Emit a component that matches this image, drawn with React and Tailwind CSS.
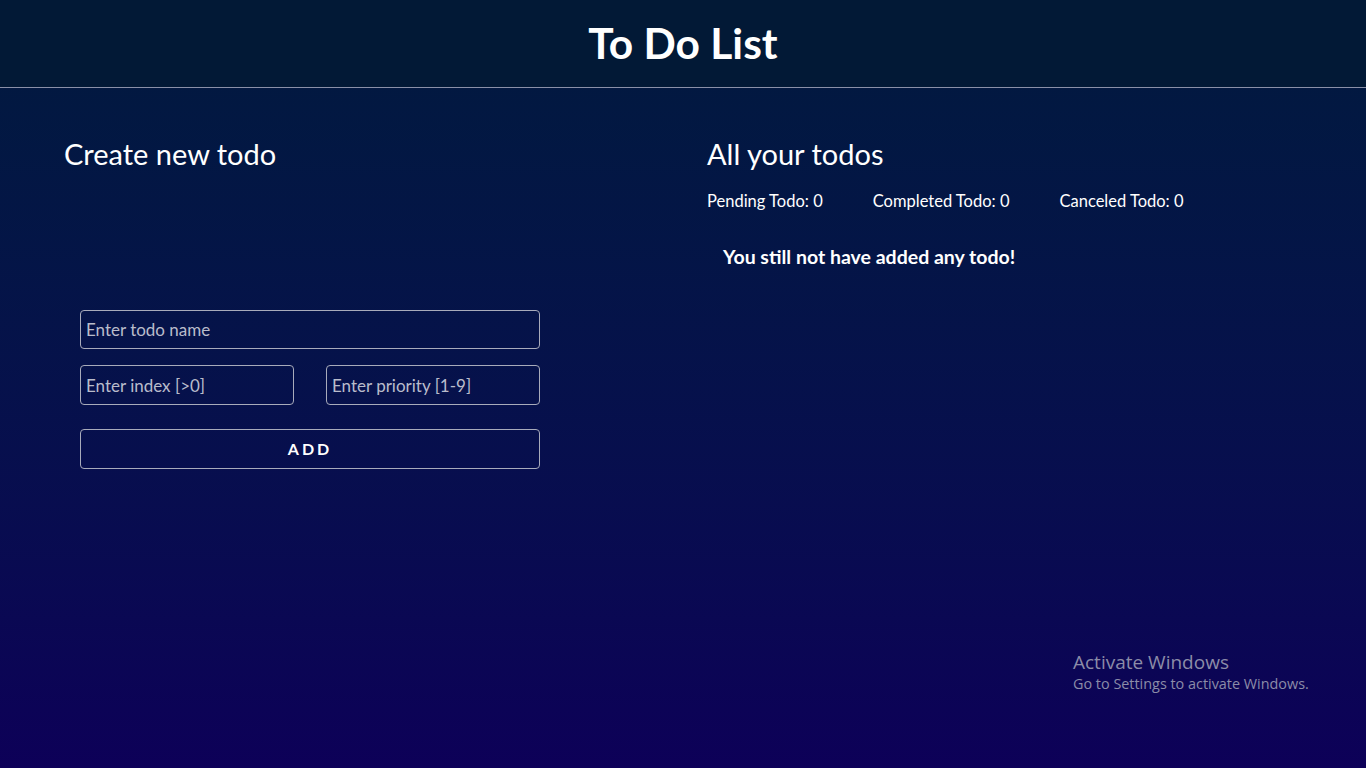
import React from "react";

const font = { fontFamily: "Lato, 'Noto Sans', sans-serif" };

const App = () => {
  return (
    <div
      className="min-h-[768px] w-full bg-gradient-to-b from-[#011a3e] to-[#0d0058] text-white relative"
      style={font}
    >
      {/* Header */}
      <header className="h-[88px] bg-[#021936] border-b border-[#8a90a8] flex items-center justify-center">
        <h1 className="text-[42.5px] font-bold leading-none">To Do List</h1>
      </header>

      <main className="grid grid-cols-2 gap-12 px-16 pt-[49px]">
        {/* Create todo */}
        <section>
          <h2 className="text-[29px] leading-[34px]">Create new todo</h2>
          <form className="mt-[139px] ml-4 w-[460px] flex flex-col" onSubmit={(e) => e.preventDefault()}>
            <input
              className="h-[39px] w-full rounded border border-[#a8abbb] bg-transparent px-[5px] text-[17px] text-white placeholder:text-[#b9bccb] outline-none"
              placeholder="Enter todo name"
            />
            <div className="mt-4 flex gap-8">
              <input
                className="h-10 w-[214px] rounded border border-[#a8abbb] bg-transparent px-[5px] text-[17px] text-white placeholder:text-[#b9bccb] outline-none"
                placeholder="Enter index [>0]"
              />
              <input
                className="h-10 w-[214px] rounded border border-[#a8abbb] bg-transparent px-[5px] text-[17px] text-white placeholder:text-[#b9bccb] outline-none"
                placeholder="Enter priority [1-9]"
              />
            </div>
            <button
              type="submit"
              className="mt-6 h-10 w-full rounded border border-[#a8abbb] bg-transparent text-[16px] font-bold tracking-[3px] text-white"
            >
              ADD
            </button>
          </form>
        </section>

        {/* Todo list */}
        <section>
          <h2 className="text-[29px] leading-[34px]">All your todos</h2>
          <div className="mt-[18px] flex gap-[50px] text-[16.5px]">
            <span>Pending Todo: 0</span>
            <span>Completed Todo: 0</span>
            <span>Canceled Todo: 0</span>
          </div>
          <p className="mt-[28px] ml-4 text-[19.5px] font-bold">You still not have added any todo!</p>
        </section>
      </main>

      {/* Windows watermark */}
      <div
        className="absolute left-[1073px] top-[650px] text-[#8b8ca8]"
        style={{ fontFamily: "'Open Sans', 'Noto Sans', sans-serif" }}
      >
        <div className="text-[19px] leading-6">Activate Windows</div>
        <div className="text-[14.4px] leading-5">Go to Settings to activate Windows.</div>
      </div>
    </div>
  );
};

export default App;
